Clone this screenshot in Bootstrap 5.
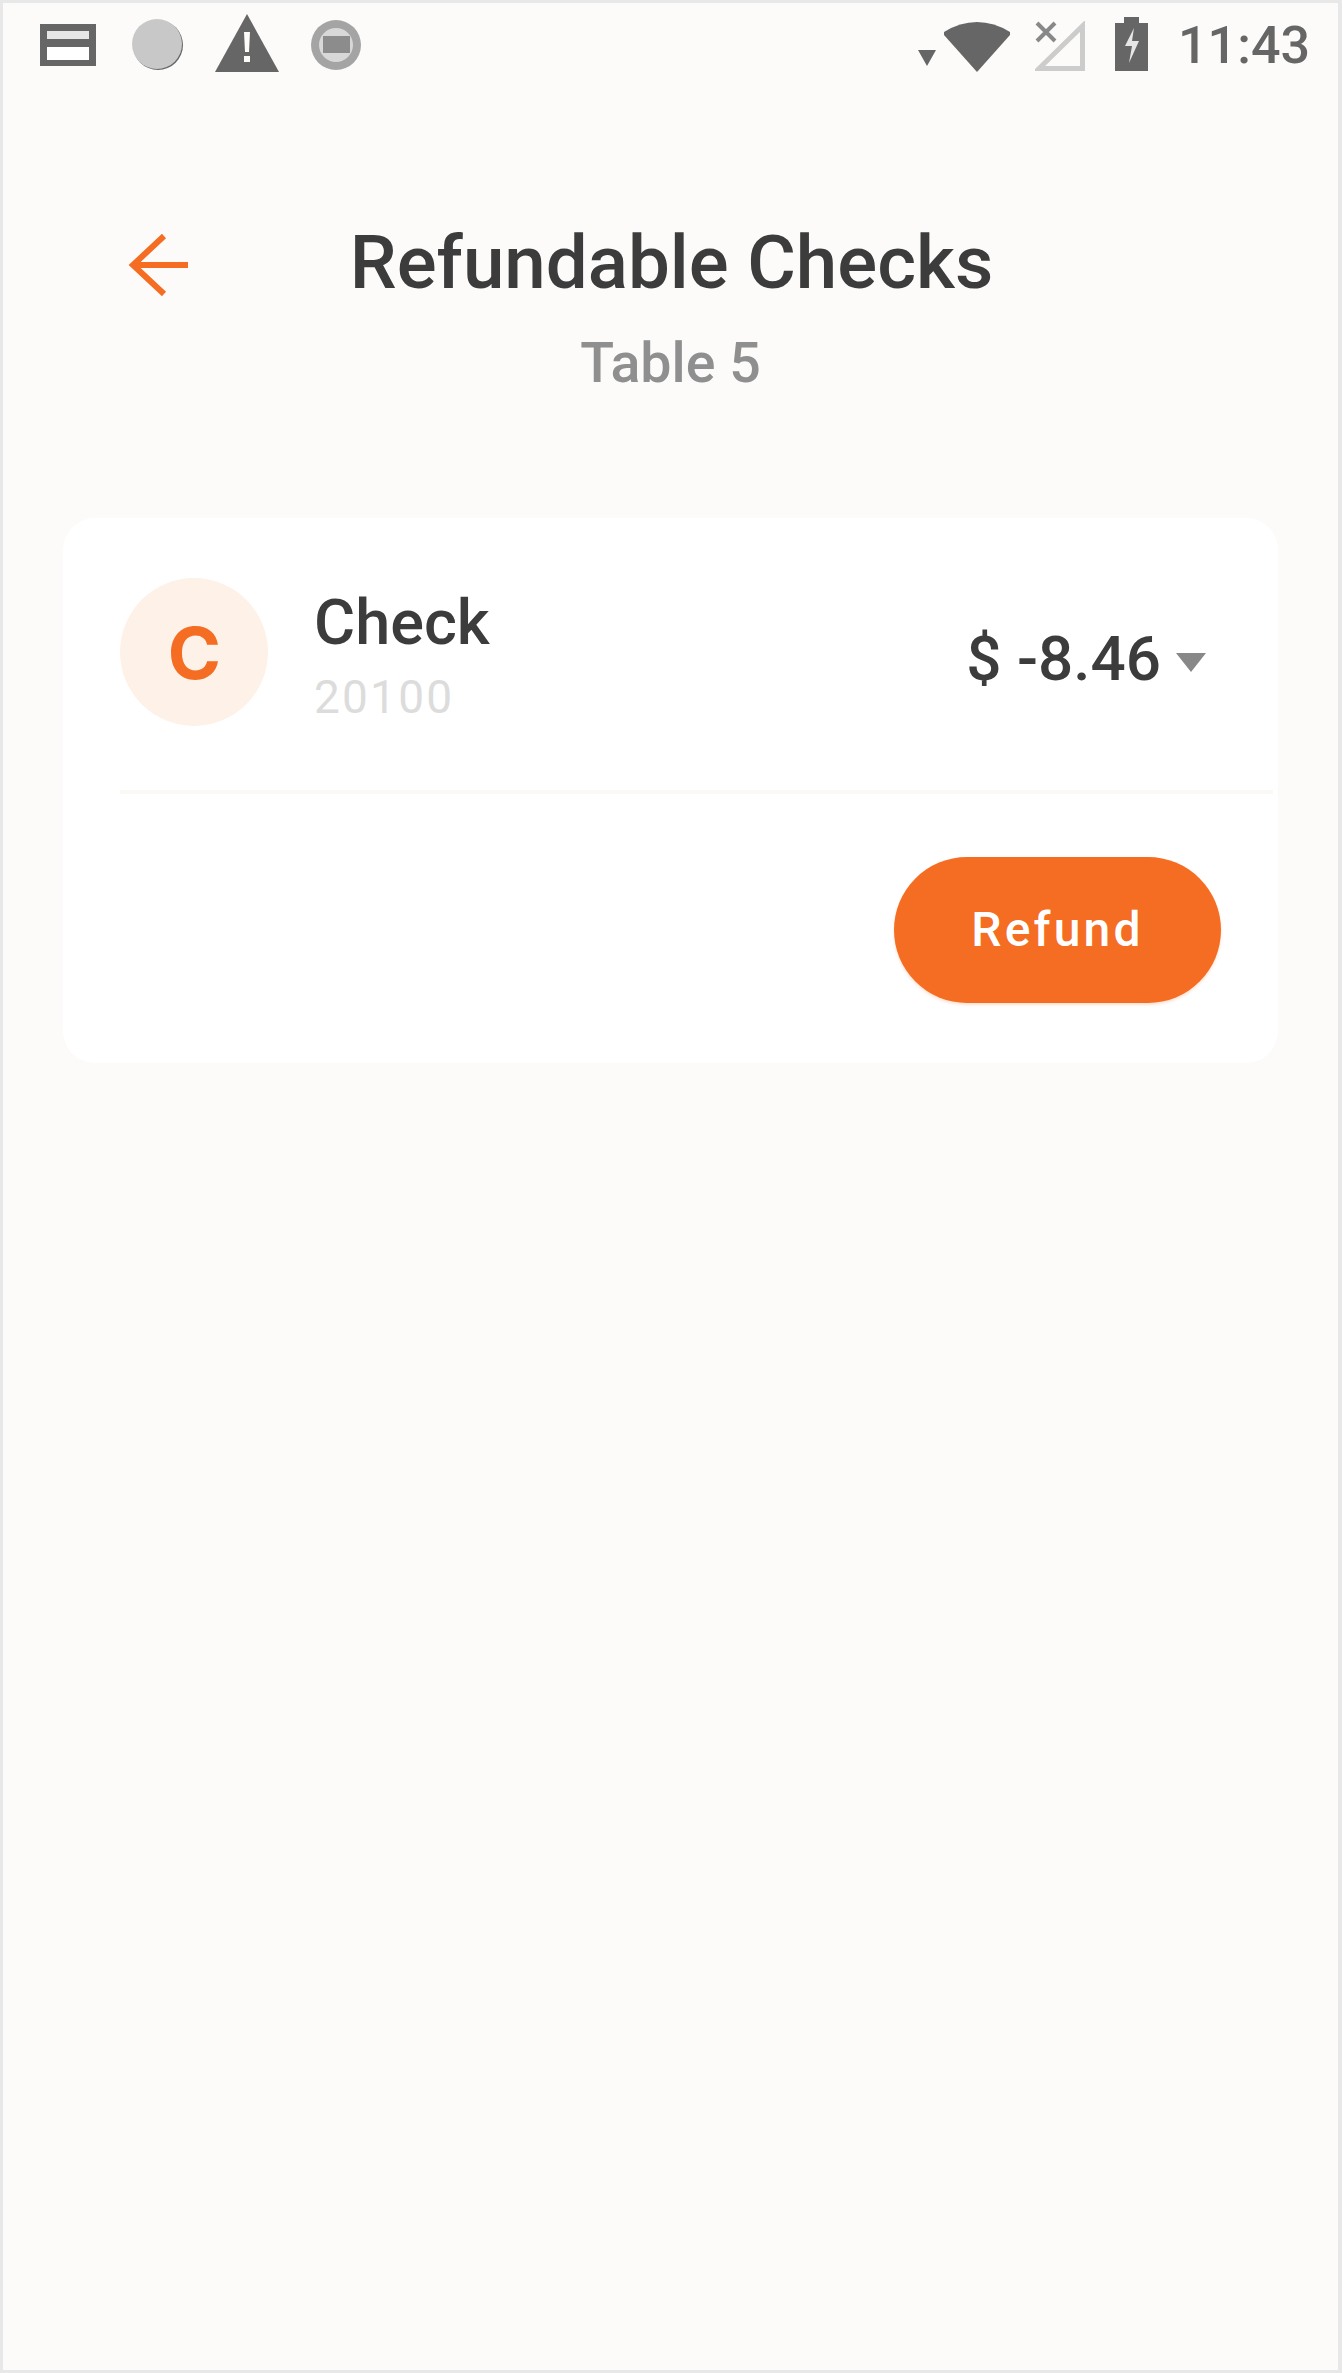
<!DOCTYPE html>
<html lang="en">
<head>
<meta charset="utf-8">
<title>Refundable Checks</title>
<link href="https://cdn.jsdelivr.net/npm/bootstrap@5.3.0/dist/css/bootstrap.min.css" rel="stylesheet">
<style>
html,body{height:100%;margin:0}
body{background:#e8e8e8;font-family:Roboto,"Liberation Sans",sans-serif}
.phone-screen{height:2373px;background:#fcfbf9;border:3px solid #e8e8e8;border-right-width:4px;overflow:hidden}
.status-strip{height:80px;padding:11px 28px 0 37px}
.status-strip svg{display:block;flex:none}
.gap-card{margin-left:36px}
.gap-warn{margin-left:31px;margin-bottom:4px}
.gap-sync{margin-left:32px}
.tiny-arrow{margin-top:36px;margin-right:8px}
.wifi-mark{margin-top:8px}
.signal-mark{margin-top:7px;margin-left:25px}
.battery-mark{margin-top:3px;margin-left:30px}
.time-text{font-size:52px;line-height:56px;color:#666;font-weight:500;margin:4px 0 0 30px}
.page-head{height:435px;position:relative;padding-top:141px}
.back-arrow{position:absolute;left:124px;top:151px}
.head-title{font-size:74.5px;line-height:78px;font-weight:500;color:#3c3c3c;text-align:center;margin:0;padding-left:2px}
.head-sub{font-size:55.5px;line-height:60px;font-weight:500;color:#8f8f8f;text-align:center;margin-top:32px}
.check-panel{margin:0 60px;height:545px;background:#fff;border-radius:32px;border:0}
.check-row{height:276px;margin-left:57px;padding:60px 67px 0 0;border-bottom:4px solid #fbf9f6;margin-right:5px}
.avatar-disc{width:148px;height:148px;border-radius:50%;background:#fdf1e8;color:#f46d22;font-family:Inter,Roboto,sans-serif;font-size:72px;font-weight:700;flex:none;padding:2px 0 0 1px}
.check-name{font-size:63px;line-height:66px;font-weight:500;color:#3c3c3c;margin-top:12px}
.check-code{font-size:46px;line-height:54px;color:#dcdcdc;margin-top:14px;letter-spacing:2.2px}
.check-info{margin-left:46px}
.amount-box{height:162px}
.amount-text{font-size:62px;line-height:70px;font-weight:500;color:#3c3c3c}
.amount-caret{margin-left:15px;margin-top:6px}
.refund-wrap{padding:63px 57px 0 0}
.refund-btn{width:327px;height:146px;border-radius:73px;background:#f46d22;border:0;color:#fff;font-size:48px;font-weight:500;letter-spacing:3.2px;box-shadow:0 2px 3px rgba(245,108,32,.2)}
.refund-btn:hover,.refund-btn:active{background:#f46d22;color:#fff}
</style>
</head>
<body>
<div class="phone-screen">
  <div class="status-strip d-flex justify-content-between align-items-start">
    <div class="d-flex align-items-center">
      <svg width="56" height="44" viewBox="0 0 56 44"><path fill="#666" d="M0 1h56v42H0z"/><path fill="#e6e6e6" d="M7 8h42v8H7z"/><path fill="#fff" d="M7 24h42v13H7z"/></svg>
      <svg class="gap-card" width="52" height="52" viewBox="0 0 52 52"><circle cx="26" cy="26" r="25" fill="#666"/><circle cx="25" cy="25" r="25" fill="#c8c8c8"/></svg>
      <svg class="gap-warn" width="64" height="58" viewBox="0 0 64 58"><path fill="#666" d="M32 0l32 58H0z"/><path fill="#fdfcfa" d="M29 18h6l-1 20h-4zM29 42h6v6h-6z"/></svg>
      <svg class="gap-sync" width="50" height="50" viewBox="0 0 50 50"><circle cx="25" cy="25" r="25" fill="#a4a4a4"/><circle cx="25" cy="25" r="17" fill="#d8d8d8"/><path fill="#8c8c8c" d="M12 16h27v17H12z"/></svg>
    </div>
    <div class="d-flex align-items-start">
      <svg class="tiny-arrow" width="18" height="16" viewBox="0 0 18 16"><path fill="#666" d="M0 0h18L9 16z"/></svg>
      <svg class="wifi-mark" width="66" height="50" viewBox="0 0 66 50"><path fill="#666" d="M0 10v3l33 37 33-37v-3Q50 0 33 0T0 10z"/></svg>
      <svg class="signal-mark" width="50" height="50" viewBox="0 0 50 50"><path fill="none" stroke="#ccc" stroke-width="5" d="M4 47.500h43.500V5z"/><path fill="none" stroke="#888" stroke-width="4" d="M2 2l18 18M20 2L2 20"/></svg>
      <svg class="battery-mark" width="33" height="54" viewBox="0 0 33 54"><path fill="#666" d="M9 0h15v6h9v48H0V6h9z"/><path fill="#e6e6e6" d="M19 11l-9 18h7l-3 17 10-22h-7z"/></svg>
      <div class="time-text">11:43</div>
    </div>
  </div>
  <div class="page-head">
    <svg class="back-arrow" width="62" height="62" viewBox="0 0 62 62"><path fill="none" stroke="#f46d22" stroke-width="6" d="M61 31H6M37 2L6 31l31 29"/></svg>
    <h1 class="head-title">Refundable Checks</h1>
    <div class="head-sub">Table 5</div>
  </div>
  <div class="card check-panel">
    <div class="check-row d-flex align-items-start justify-content-between">
      <div class="d-flex align-items-start">
        <div class="avatar-disc d-flex align-items-center justify-content-center">C</div>
        <div class="check-info">
          <div class="check-name">Check</div>
          <div class="check-code">20100</div>
        </div>
      </div>
      <div class="amount-box d-flex align-items-center">
        <span class="amount-text">$ -8.46</span>
        <svg class="amount-caret" width="30" height="19" viewBox="0 0 30 19"><path fill="#888" d="M0 0h30L15 19z"/></svg>
      </div>
    </div>
    <div class="refund-wrap d-flex justify-content-end">
      <button type="button" class="btn refund-btn">Refund</button>
    </div>
  </div>
</div>
<script src="https://cdn.jsdelivr.net/npm/bootstrap@5.3.0/dist/js/bootstrap.bundle.min.js"></script>
</body>
</html>
